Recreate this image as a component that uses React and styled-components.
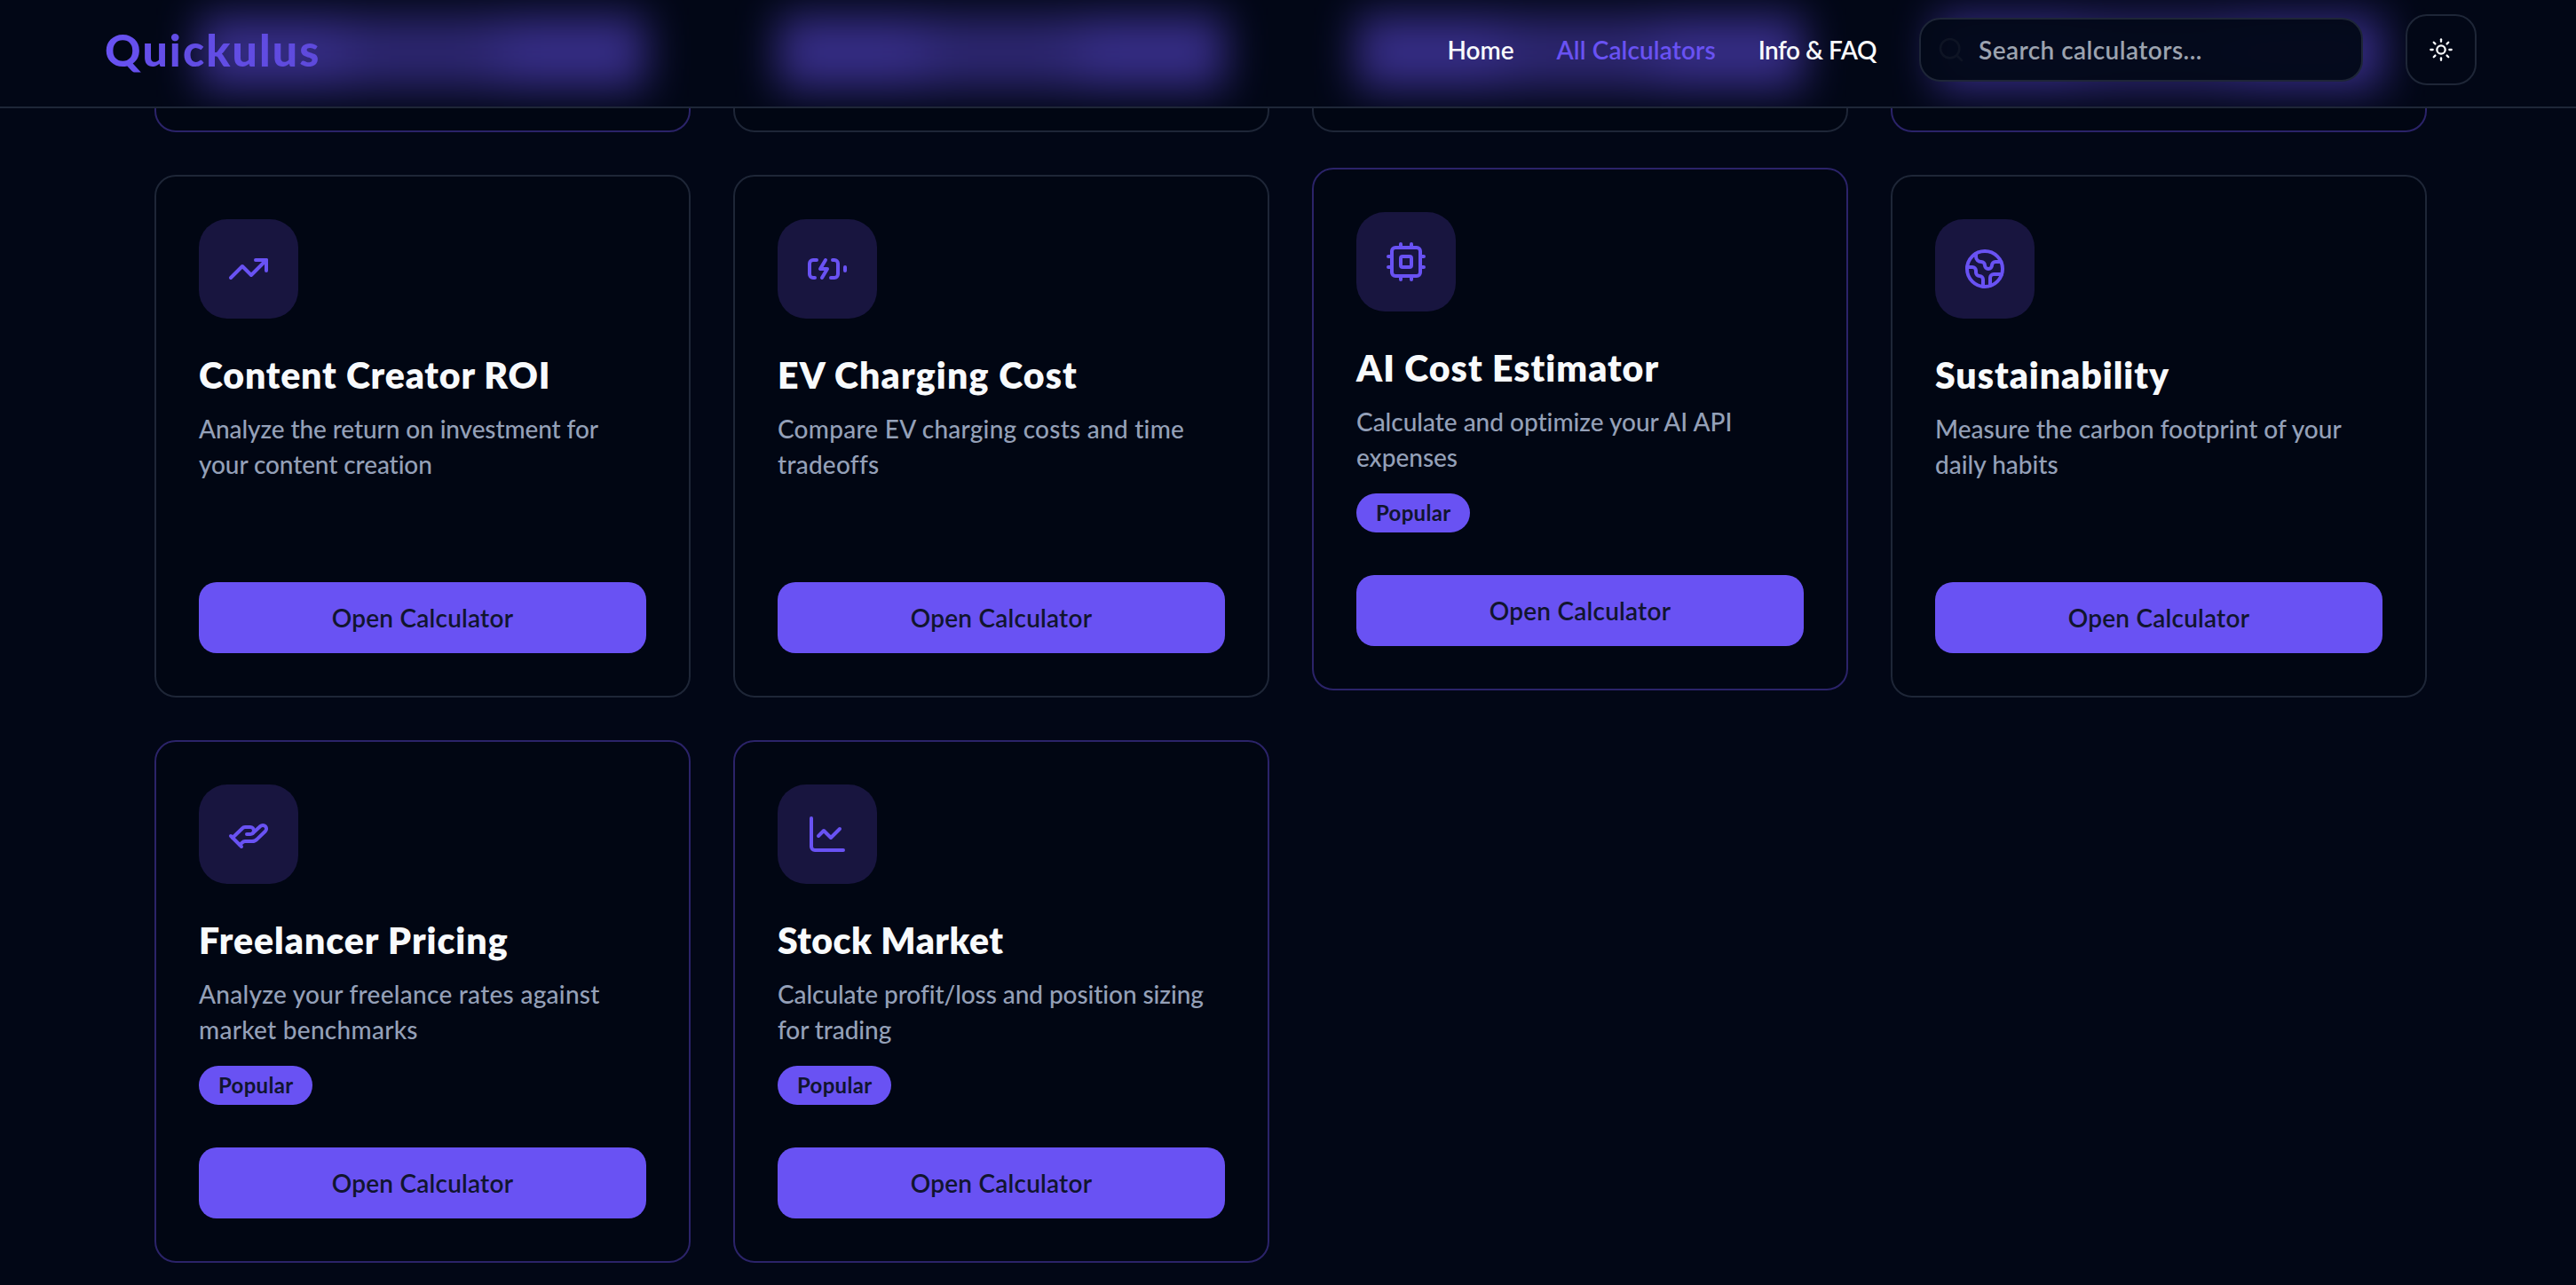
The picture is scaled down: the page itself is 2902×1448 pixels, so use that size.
import React from 'react';
import styled, { createGlobalStyle } from 'styled-components';
import { TrendingUp, Earth, HandHelping, ChartLine, Search, Sun } from 'lucide-react';

const primary = '#6952f3';
const border = '#1e2637';

const GlobalStyle = createGlobalStyle`
  * {
    box-sizing: border-box;
  }
  body {
    margin: 0;
    background: #020716;
    font-family: Lato, 'Open Sans', sans-serif;
    font-variant-ligatures: no-common-ligatures;
    overflow: hidden;
  }
`;

const Page = styled.div`
  height: 1448px;
  padding-left: 6px;
  overflow: hidden;
  display: flex;
  flex-direction: column;
`;

const Header = styled.header`
  height: 122px;
  flex: none;
  position: sticky;
  top: 0;
  z-index: 10;
  margin-left: -6px;
  padding: 0 112px 8px 118px;
  display: flex;
  align-items: center;
  overflow: hidden;
  background: #020716;
  border-bottom: 2px solid ${border};
`;

// glow of the purple buttons that sit behind the header
const Glow = styled.div`
  position: absolute;
  z-index: -1;
  top: 17px;
  left: 174px;
  width: 2560px;
  height: 84px;
  display: grid;
  grid-template-columns: repeat(4, 1fr);
  gap: 48px;
  filter: blur(24px);
  opacity: 0.5;
`;

const GlowBar = styled.span`
  margin: 0 50px;
  background: linear-gradient(to right, ${primary} 28%, #5745c8 38%, #5745c8 62%, ${primary} 72%);
`;

const Logo = styled.a`
  font-size: 50px;
  font-weight: 900;
  line-height: 64px;
  letter-spacing: 2.1px;
  margin-right: auto;
  background: linear-gradient(to right, ${primary}, rgba(105, 82, 243, 0.8));
  background-clip: text;
  color: transparent;
`;

const Nav = styled.nav`
  display: flex;
  gap: 48px;
  margin-right: 48px;
`;

const NavLink = styled.a`
  font-size: 28px;
  font-weight: 600;
  line-height: 40px;
  white-space: nowrap;
  letter-spacing: ${(p) => p.$track || 0}px;
  color: ${(p) => (p.$active ? primary : '#f8fafc')};
`;

const SearchBox = styled.div`
  width: 500px;
  height: 72px;
  margin-right: 48px;
  padding-left: 18px;
  display: flex;
  align-items: center;
  gap: 15px;
  border: 2px solid ${border};
  border-radius: 24px;
  background: rgba(2, 8, 23, 0.94);
  font-size: 28px;
  font-weight: 600;
  color: #9ca3af;
  svg {
    color: #0e1424;
  }
`;

const Placeholder = styled.span`
  letter-spacing: 0.43px;
`;

const ThemeButton = styled.button`
  width: 80px;
  height: 80px;
  padding: 0;
  display: grid;
  place-items: center;
  border: 2px solid ${border};
  border-radius: 24px;
  background: #020716;
  color: #f8fafc;
`;

const Grid = styled.main`
  width: 2560px;
  margin: -562px auto 0;
  flex: none;
  display: grid;
  grid-template-columns: repeat(4, 1fr);
  grid-auto-rows: 589px;
  gap: 48px;
`;

const CardBox = styled.article`
  display: flex;
  flex-direction: column;
  align-items: flex-start;
  padding: 48px;
  border: 2px solid ${(p) => (p.$popular ? '#2b2369' : border)};
  border-radius: 24px;
  background: #010613;
  transform: ${(p) => (p.$hovered ? 'translateY(-8px)' : 'none')};
`;

const IconBox = styled.div`
  width: 112px;
  height: 112px;
  margin-bottom: 38px;
  display: grid;
  place-items: center;
  border-radius: 32px;
  background: #18153f;
  color: ${primary};
`;

const Title = styled.h3`
  margin: 0 0 14px;
  font-size: 41px;
  font-weight: 800;
  line-height: 52px;
  white-space: nowrap;
  letter-spacing: ${(p) => p.$track || 0}px;
  color: #f8fafc;
`;

const Description = styled.p`
  margin: 0;
  font-size: 28px;
  font-weight: 500;
  line-height: 40px;
  white-space: pre-line;
  letter-spacing: ${(p) => p.$track || 0}px;
  color: #94a0b8;
`;

const Badge = styled.span`
  height: 44px;
  margin-top: 21px;
  padding: 0 22px;
  border-radius: 22px;
  background: ${primary};
  color: #11152f;
  font-size: 24px;
  font-weight: 700;
  line-height: 44px;
  letter-spacing: 0.3px;
`;

const OpenButton = styled.button`
  width: 100%;
  height: 80px;
  margin-top: auto;
  border: none;
  border-radius: 20px;
  background: ${primary};
  color: #11152f;
  font-family: inherit;
  font-size: 28px;
  font-weight: 600;
  letter-spacing: 0.2px;
`;

const StrokeIcon = styled.svg.attrs({ viewBox: '0 0 24 24' })`
  width: 48px;
  height: 48px;
  fill: none;
  stroke: currentColor;
  stroke-width: 2;
  stroke-linecap: round;
  stroke-linejoin: round;
`;

const BatteryIcon = () => (
  <StrokeIcon>
    <path d="M15 7h1a2 2 0 0 1 2 2v6a2 2 0 0 1-2 2h-2" />
    <path d="M6 7H4a2 2 0 0 0-2 2v6a2 2 0 0 0 2 2h1" />
    <path d="m11 7-3 5h4l-3 5" />
    <path d="M22 11v2" />
  </StrokeIcon>
);

const CpuIcon = () => (
  <StrokeIcon>
    <rect x="4" y="4" width="16" height="16" rx="2" />
    <rect x="9" y="9" width="6" height="6" rx="1" />
    <path d="M15 2v2M15 20v2M2 15h2M2 9h2M20 15h2M20 9h2M9 2v2M9 20v2" />
  </StrokeIcon>
);

const calculators = [
  {
    name: 'Content Creator ROI',
    text: 'Analyze the return on investment for\nyour content creation',
    icon: <TrendingUp size={48} />,
    titleTrack: 0.83,
    textTrack: -0.1,
  },
  {
    name: 'EV Charging Cost',
    text: 'Compare EV charging costs and time\ntradeoffs',
    icon: <BatteryIcon />,
    titleTrack: 1.15,
    textTrack: 0.24,
  },
  {
    name: 'AI Cost Estimator',
    text: 'Calculate and optimize your AI API\nexpenses',
    icon: <CpuIcon />,
    popular: true,
    hovered: true,
    titleTrack: 1,
    textTrack: -0.02,
  },
  {
    name: 'Sustainability',
    text: 'Measure the carbon footprint of your\ndaily habits',
    icon: <Earth size={48} />,
    titleTrack: 0.97,
  },
  {
    name: 'Freelancer Pricing',
    text: 'Analyze your freelance rates against\nmarket benchmarks',
    icon: <HandHelping size={48} />,
    popular: true,
    titleTrack: 0.98,
    textTrack: 0.27,
  },
  {
    name: 'Stock Market',
    text: 'Calculate profit/loss and position sizing\nfor trading',
    icon: <ChartLine size={48} />,
    popular: true,
    titleTrack: 0.47,
    textTrack: -0.08,
  },
];

const Card = ({ item }) => (
  <CardBox $popular={item.popular} $hovered={item.hovered}>
    <IconBox>{item.icon}</IconBox>
    <Title $track={item.titleTrack}>{item.name}</Title>
    <Description $track={item.textTrack}>{item.text}</Description>
    {item.popular && <Badge>Popular</Badge>}
    <OpenButton>Open Calculator</OpenButton>
  </CardBox>
);

const App = () => (
  <>
    <GlobalStyle />
    <Page>
      <Header>
        <Glow>
          <GlowBar />
          <GlowBar />
          <GlowBar />
          <GlowBar />
        </Glow>
        <Logo>Quickulus</Logo>
        <Nav>
          <NavLink>Home</NavLink>
          <NavLink $active $track={0.1}>All Calculators</NavLink>
          <NavLink $track={-0.5}>Info &amp; FAQ</NavLink>
        </Nav>
        <SearchBox>
          <Search size={32} />
          <Placeholder>Search calculators...</Placeholder>
        </SearchBox>
        <ThemeButton>
          <Sun size={28} />
        </ThemeButton>
      </Header>
      <Grid>
        {/* row scrolled under the header, only the bottom edges are in view */}
        {[true, false, false, true].map((popular, i) => (
          <CardBox $popular={popular} key={i} />
        ))}
        {calculators.map((item) => (
          <Card item={item} key={item.name} />
        ))}
      </Grid>
    </Page>
  </>
);

export default App;
